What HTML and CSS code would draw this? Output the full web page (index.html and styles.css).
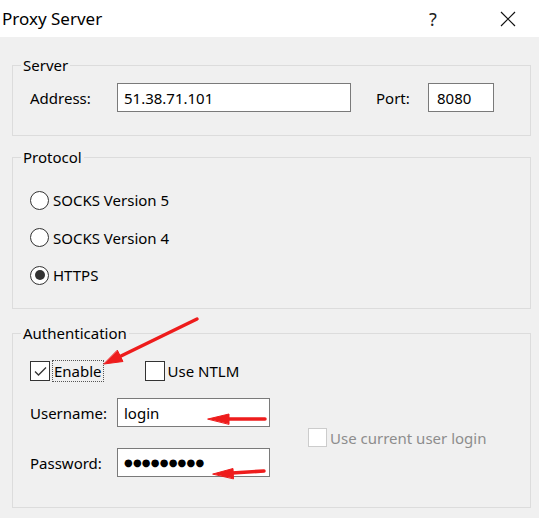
FILE: index.html
```html
<!DOCTYPE html>
<html lang="en">
  <head>
    <meta charset="UTF-8" />
    <title>Proxy Server</title>
    <link rel="stylesheet" href="styles.css">
  </head>
  <body>
    <div class="titlebar">
      <span class="title">Proxy Server</span>
      <span class="ctl help">?</span>
      <span class="ctl close">
        <svg width="16" height="16" viewBox="0 0 16 16">
          <path d="M1 1L15 15M15 1L1 15" stroke="#111" stroke-width="1.2" fill="none" />
        </svg>
      </span>
    </div>

    <div class="content">
      <fieldset class="group server">
        <legend>Server</legend>
        <div class="row">
          <span class="lbl">Address:</span>
          <div class="field addr">51.38.71.101</div>
          <span class="lbl portLbl">Port:</span>
          <div class="field port">8080</div>
        </div>
      </fieldset>

      <fieldset class="group protocol">
        <legend>Protocol</legend>
        <div class="options">
          <div class="opt"><span class="radio"></span>SOCKS Version 5</div>
          <div class="opt"><span class="radio"></span>SOCKS Version 4</div>
          <div class="opt"><span class="radio on"></span>HTTPS</div>
        </div>
      </fieldset>

      <fieldset class="group auth">
        <legend>Authentication</legend>
        <div class="checks">
          <div class="check">
            <span class="box">
              <svg width="17" height="17" viewBox="0 0 17 17">
                <path d="M3 8.5L6.5 12L14 4.5" stroke="#333" stroke-width="1.3" fill="none" />
              </svg>
            </span>
            <span class="focus">Enable</span>
          </div>
          <div class="check ntlm">
            <span class="box"></span>
            <span>Use NTLM</span>
          </div>
        </div>
        <div class="creds">
          <div class="fields">
            <span class="lbl">Username:</span>
            <div class="field">login</div>
            <span class="lbl">Password:</span>
            <div class="field"><span class="dots">●●●●●●●●●</span></div>
          </div>
          <div class="check current">
            <span class="box off"></span>
            <span>Use current user login</span>
          </div>
        </div>
      </fieldset>
    </div>

    <!-- красные стрелки поверх диалога -->
    <svg class="marks" width="539" height="518" viewBox="0 0 539 518">
      <g fill="#ee1c1c" stroke="#ee1c1c" stroke-linecap="round">
        <line x1="197" y1="319" x2="121" y2="356" stroke-width="3.5" />
        <polygon points="104,364 123,361.5 117.5,350.5" stroke-width="1" />
        <line x1="228" y1="419" x2="265" y2="419" stroke-width="3.5" />
        <polygon points="208,419 229,414 229,424" stroke-width="1" />
        <line x1="232" y1="473" x2="264" y2="471" stroke-width="3.5" />
        <polygon points="213,474 233,468.5 233.5,478.5" stroke-width="1" />
      </g>
    </svg>
  </body>
</html>
```

FILE: styles.css
```css
body {
  margin: 0;
  width: 539px;
  height: 518px;
  overflow: hidden;
  position: relative;
  background: #f0f0f0;
  font-family: "Noto Sans", sans-serif;
  font-size: 15px;
  line-height: 20px;
  color: #000;
}

.titlebar {
  display: flex;
  align-items: center;
  height: 37px;
  padding: 0 8px 0 2px;
  background: #fff;
}

.title {
  flex: 1;
  font-size: 17px;
}

.ctl {
  width: 46px;
  height: 37px;
  display: flex;
  align-items: center;
  justify-content: center;
}

.help {
  margin-right: 29px;
  font-size: 18px;
  color: #222;
}

.content {
  padding: 0 8px 0 12px;
}

.group {
  margin: 0;
  border: 1px solid #dcdcdc;
  padding: 8px 8px 23px 17px;
}

.group legend {
  padding: 0 2px;
  margin-left: -9px;
}

.server {
  margin-top: 18px;
}

.protocol {
  margin-top: 11px;
  padding-top: 23px;
}

.auth {
  margin-top: 14px;
  padding-top: 18px;
  padding-bottom: 30px;
}

.row {
  display: flex;
  align-items: center;
  height: 29px;
}

.lbl {
  width: 87px;
}

.portLbl {
  width: 52px;
  margin-left: 25px;
}

.field {
  box-sizing: border-box;
  height: 29px;
  display: flex;
  align-items: center;
  padding: 0 6px;
  border: 1px solid #7a7a7a;
  background: #fff;
}

.addr {
  width: 234px;
}

.port {
  width: 66px;
  padding-left: 8px;
}

/* радиокнопки */
.options {
  display: flex;
  flex-direction: column;
  gap: 17.5px;
}

.opt {
  display: flex;
  align-items: center;
  gap: 4px;
  height: 20px;
}

.radio {
  box-sizing: border-box;
  width: 19px;
  height: 19px;
  display: flex;
  align-items: center;
  justify-content: center;
  border: 1px solid #333;
  border-radius: 50%;
  background: #fff;
}

.radio.on::after {
  content: "";
  width: 10px;
  height: 10px;
  border-radius: 50%;
  background: #333;
}

/* чекбоксы */
.checks {
  display: flex;
  align-items: center;
  height: 20px;
}

.check {
  display: flex;
  align-items: center;
  gap: 3px;
}

.box {
  box-sizing: border-box;
  width: 20px;
  height: 20px;
  display: flex;
  align-items: center;
  justify-content: center;
  border: 1px solid #333;
  background: #fff;
}

.box.off {
  border-color: #cccccc;
}

.focus {
  padding: 0 1px;
  outline: 1px dotted #555;
}

.ntlm {
  margin-left: 42px;
}

.creds {
  display: flex;
  align-items: center;
  margin-top: 17px;
}

.fields {
  display: grid;
  grid-template-columns: 87px 153px;
  row-gap: 21px;
  align-items: center;
}

.current {
  margin-left: 38px;
  color: #8d8d8d;
}

.current .box {
  width: 19px;
  height: 19px;
}

.dots {
  font-family: "DejaVu Sans", sans-serif;
  font-size: 10px;
  letter-spacing: 0.2px;
}

.marks {
  position: absolute;
  top: 0;
  left: 0;
  pointer-events: none;
}
```
